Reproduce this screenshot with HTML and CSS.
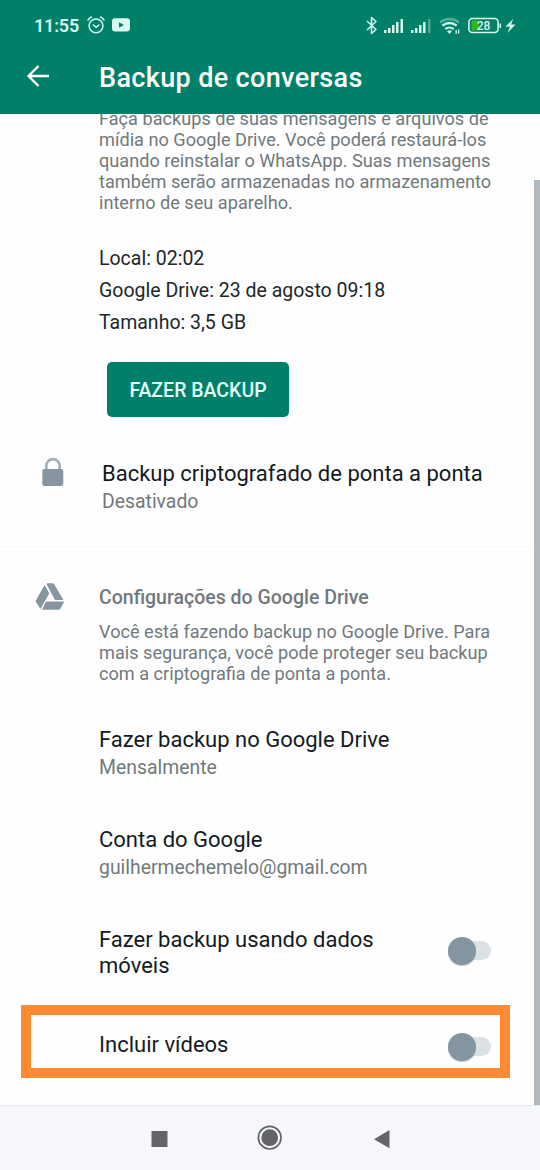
FILE: index.html
```html
<!DOCTYPE html>
<html lang="pt-BR">
<head>
<meta charset="utf-8">
<title>Backup de conversas</title>
<link rel="stylesheet" href="styles.css">
</head>
<body>
<div class="screen">
  <header class="header">
    <div class="status">
      <span class="clock">11:55</span>
      <svg class="alarm" width="18" height="18" viewBox="0 0 18 18" fill="none" stroke="#d5f5ee" stroke-width="1.5" stroke-linecap="round" stroke-linejoin="round"><circle cx="9" cy="9.8" r="6.9"/><path d="M1 4.2Q2 2 4.4 1M17 4.2Q16 2 13.600 1M6.300 9l2.700 2.300L12 9"/></svg>
      <svg class="video" width="18" height="14" viewBox="0 0 18 14"><rect y=".3" width="18" height="13.200" rx="3" fill="#d9f6f1"/><path d="M7 4.200L12 7L7 9.800Z" fill="#008069"/></svg>
      <span class="grow"></span>
      <svg width="155" height="24" viewBox="0 0 155 24" fill="#d5f5ee">
        <path d="M2 8L11 16.500L6.500 20.500V4.500L11 8.500L2 17" fill="none" stroke="#d5f5ee" stroke-width="1.500" stroke-linejoin="round"/>
        <path d="M19 17h2.500v3H19zM23 15h2.500v5H23zM27 12h2.500v8H27zM31 9h2.500v11H31zM35.500 6H38v14h-2.500z"/>
        <path d="M46 17h2.500v3H46zM50 15h2.500v5H50zM54 12h2.500v8H54zM58 9h2.500v11H58z"/><path d="M63 6h2.500v14H63z" opacity=".35"/>
        <g fill="none" stroke="#d5f5ee" stroke-width="2.200"><path d="M75 9.500Q84.500 2.500 94 9.500" opacity=".4"/><path d="M77.300 12.700Q84.500 7.300 91.700 12.700M80.300 16Q84.500 13 88.700 16"/></g>
        <path d="M82 18.200Q84.500 16.200 87 18.200L84.500 21zM90.500 17h1.300v4h-1.300zM93 16.500h1.300v4H93z"/>
        <rect x="103.900" y="5.500" width="29.200" height="14" rx="3.500" fill="none" stroke="#d5f5ee" stroke-width="1.600"/>
        <path d="M106.500 7.500h7.500v10h-7.500z" fill="#35b51d"/><path d="M134.500 10.500h1.500v4.500h-1.500z"/>
        <text class="battery" x="118.600" y="17" text-anchor="middle">28</text>
        <path d="M148.500 5.500L140.500 13.700h4.500L142.500 20L150.500 11.500H146z"/>
      </svg>
    </div>
    <div class="toolbar">
      <svg class="back" width="24" height="24" viewBox="0 0 24 24" fill="none" stroke="#fff" stroke-width="2.300"><path d="M23 12H2.500M12.500 2L2.500 12L12.500 22"/></svg>
      <h1>Backup de conversas</h1>
    </div>
  </header>

  <main class="content">
    <p class="note intro">Faça backups de suas mensagens e arquivos de<br>mídia no Google Drive. Você poderá restaurá-los<br>quando reinstalar o WhatsApp. Suas mensagens<br>também serão armazenadas no armazenamento<br>interno de seu aparelho.</p>
    <div class="stats">
      <div>Local: 02:02</div>
      <div>Google Drive: 23 de agosto 09:18</div>
      <div>Tamanho: 3,5 GB</div>
    </div>
    <button class="button">FAZER BACKUP</button>
    <section class="encrypted">
      <svg class="lock" width="22" height="29" viewBox="0 0 22 29"><path d="M4.300 12V7.800a6.700 6.700 0 0 1 13.400 0V12" fill="none" stroke="#a3b0b5" stroke-width="2.600"/><rect x=".3" y="11" width="21" height="17" rx="2" fill="#8696a0"/></svg>
      <div>
        <div class="title">Backup criptografado de ponta a ponta</div>
        <div class="sub">Desativado</div>
      </div>
    </section>
    <section class="drive">
      <svg class="drive-icon" width="30" height="28" viewBox="0 0 30 28" fill="#8696a0"><path d="M9.500 2L14.300 10.300L5.500 26L.5 18.200ZM11.500 1Q12 .3 13 .3H17.500Q18.500 .3 19.300 1.500L28.500 17H20ZM11 18.500H29.300L25.500 25.500Q25 26.700 23.500 26.700H7Z"/></svg>
      <div>
        <h2>Configurações do Google Drive</h2>
        <p class="note">Você está fazendo backup no Google Drive. Para<br>mais segurança, você pode proteger seu backup<br>com a criptografia de ponta a ponta.</p>
      </div>
    </section>
    <div class="setting">
      <div class="title">Fazer backup no Google Drive</div>
      <div class="sub">Mensalmente</div>
    </div>
    <div class="setting">
      <div class="title">Conta do Google</div>
      <div class="sub">guilhermechemelo@gmail.com</div>
    </div>
    <div class="setting mobile">
      <div class="title">Fazer backup usando dados<br>móveis</div>
      <span class="toggle"></span>
    </div>
    <div class="highlight">
      <div class="title">Incluir vídeos</div>
      <span class="toggle"></span>
    </div>
    <div class="scrollbar"></div>
  </main>

  <nav class="nav">
    <svg width="540" height="64" viewBox="0 0 540 64" fill="#626466"><path d="M151.500 25h16v16h-16z"/><circle cx="269.700" cy="31.700" r="11.300" fill="none" stroke="#626466" stroke-width="1.700"/><circle cx="269.700" cy="31.700" r="8.400"/><path d="M374 33.200L389.500 24V42.300Z"/></svg>
  </nav>
</div>
</body>
</html>
```
FILE: styles.css
```css
* { box-sizing: border-box; }
body { margin: 0; font-family: Roboto, sans-serif; }
h1, h2, p { margin: 0; }
svg { display: block; flex: none; }
.screen { width: 540px; height: 1170px; display: flex; flex-direction: column; background: #fefefe; overflow: hidden; white-space: nowrap; }
.header { height: 114px; flex: none; background: #008069; }
.status { height: 50px; padding: 0 20px 0 34px; display: flex; align-items: center; }
.clock { width: 45px; font-size: 18px; font-weight: 600; letter-spacing: -.2px; color: #d9f6f1; }
.alarm { margin-left: 8px; }
.video { margin-left: 7px; }
.grow { flex: 1; }
.battery { font-size: 12px; font-weight: 500; }
.toolbar { height: 54px; padding-left: 26px; display: flex; align-items: center; }
.back { margin-top: -2px; }
.toolbar h1 { margin: 2px 0 0 49px; color: #fff; font-size: 27px; font-weight: 500; line-height: 32px; letter-spacing: .35px; }
.content { position: relative; height: 991px; flex: none; overflow: hidden; }
.note { font-size: 18.15px; line-height: 21px; color: #71797d; }
.intro { margin: -6px 0 0 99px; }
.stats { margin: 30px 0 0 99px; font-size: 19.5px; line-height: 32px; color: #20272b; }
.button { display: block; width: 182px; height: 55px; margin: 23px 0 0 107px; padding: 2px 0 0; border: 0; border-radius: 5px; background: #008069; color: #e4fffa; font: 500 19.5px/53px Roboto, sans-serif; }
.encrypted { height: 130px; padding: 44px 0 0 42px; border-bottom: 1px solid #f7f8f8; display: flex; align-items: flex-start; }
.lock { margin: -3px 38px 0 0; }
.title { font-size: 22px; line-height: 26px; color: #131a1e; }
.sub { margin-top: 3px; font-size: 19.4px; line-height: 24px; color: #71797d; }
.drive { height: 180px; padding: 39px 0 0 35px; display: flex; align-items: flex-start; }
.drive-icon { margin: -3px 34px 0 0; }
.drive h2 { margin-bottom: 11px; font-size: 19.5px; line-height: 24px; font-weight: 500; color: #71797d; }
.setting { height: 100px; margin-left: 99px; }
.mobile { height: 78px; padding-right: 49px; display: flex; justify-content: space-between; }
.toggle { position: relative; width: 38px; height: 19px; margin-top: 14px; border-radius: 10px; background: #dce1e4; }
.toggle::before { content: ""; position: absolute; left: -5px; top: -4px; width: 28px; height: 28px; border-radius: 50%; background: #8295a0; box-shadow: 0 1px 1px #bbc4c9; }
.highlight { width: 489px; height: 73px; margin-left: 21px; padding: 17px 9px 0 68px; border: 10px solid #ff8a33; display: flex; justify-content: space-between; align-items: flex-start; }
.highlight .toggle { margin-top: 5px; }
.scrollbar { position: absolute; right: 0; top: 66px; width: 6px; bottom: 0; background: #b0b9be; }
.nav { height: 65px; flex: none; border-top: 1px solid #e6e8ea; background: #f5f7fa; }
```
